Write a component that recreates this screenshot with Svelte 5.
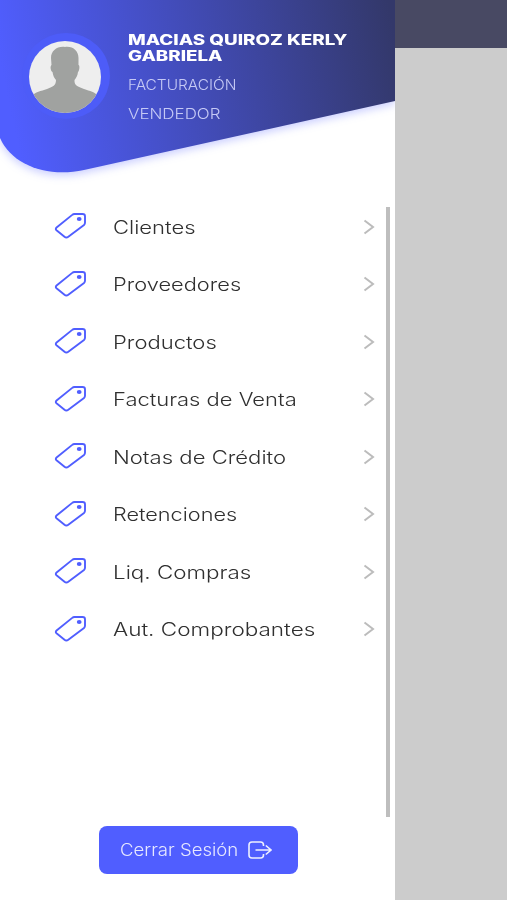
<script lang="ts">
  const user = {
    name: ['MACIAS QUIROZ KERLY', 'GABRIELA'],
    area: 'FACTURACIÓN',
    role: 'VENDEDOR'
  };

  const items = [
    { label: 'Clientes', width: 82 },
    { label: 'Proveedores', width: 128.5 },
    { label: 'Productos', width: 104 },
    { label: 'Facturas de Venta', width: 184 },
    { label: 'Notas de Crédito', width: 173 },
    { label: 'Retenciones', width: 124 },
    { label: 'Liq. Compras', width: 138 },
    { label: 'Aut. Comprobantes', width: 202.5 }
  ];

  function stretch(node: HTMLElement, width: number) {
    node.style.transform = `scaleX(${width / node.offsetWidth})`;
  }
</script>

<div class="screen">
  <aside class="drawer">
    <header class="profile">
      <svg class="profile-bg" viewBox="0 0 395 200">
        <defs>
          <linearGradient id="profile-fill" gradientUnits="userSpaceOnUse" x1="10" y1="110" x2="394" y2="28">
            <stop offset="0" stop-color="#505eff" />
            <stop offset="1" stop-color="#33386a" />
          </linearGradient>
        </defs>
        <path d="M0 0H395V101L84 170C47 178 12 165 0 138Z" fill="url(#profile-fill)" />
      </svg>

      <div class="avatar">
        <svg viewBox="0 0 72 72">
          <defs>
            <clipPath id="avatar-clip"><circle cx="36" cy="36" r="36" /></clipPath>
          </defs>
          <g clip-path="url(#avatar-clip)">
            <rect width="72" height="72" fill="#eee" />
            <path
              d="M36 6C44 5 49.500 10 49.500 17V24C51 24 50.500 30 49 31C48.500 35 47 37 45.500 39C45 45 50 46 55 48C61 50 66 51 69 55V72H3V55C6 51 12 50 18 48C23 46 27 45 27 39C25 37 24 34 23.500 31C21.500 30 21 25 22.500 24L22 17C22 10 28 5 36 6Z"
              fill="#a0a2a0"
            />
          </g>
        </svg>
      </div>

      <div class="identity">
        <h1>
          <span use:stretch={219}>{user.name[0]}</span>
          <span use:stretch={95}>{user.name[1]}</span>
        </h1>
        <p><span use:stretch={108}>{user.area}</span></p>
        <p><span use:stretch={92}>{user.role}</span></p>
      </div>
    </header>

    <nav>
      <ul>
        {#each items as item}
          <li>
            <svg class="tag" viewBox="0 0 34 28">
              <path d="M21.500 2H29.500Q32 2 32 4.300V10.800Q32 12.100 31 13L15.300 24.700Q13.300 26.200 11.500 24.700L3.500 18.300Q2 17 3.600 15.500L19.200 2.900Q20.200 2 21.500 2Z" />
              <ellipse cx="26.200" cy="7" rx="2.400" ry="2" />
            </svg>
            <span class="label" use:stretch={item.width}>{item.label}</span>
            <svg class="chevron" viewBox="0 0 12 16">
              <path d="M1.500 1.500L10 8L1.500 14.500" />
            </svg>
          </li>
        {/each}
      </ul>
    </nav>

    <button>
      <span class="logout-text"><span use:stretch={118}>Cerrar Sesión</span></span>
      <svg viewBox="0 0 24 18">
        <path d="M15.500 5V4Q15.500 1 12.500 1H4Q1 1 1 4V14Q1 17 4 17H12.500Q15.500 17 15.500 14V13" />
        <path d="M7.500 9H22.500M17.800 4.500L23 9L17.800 13.500" />
      </svg>
    </button>
  </aside>

  <div class="backdrop">
    <div class="topbar"></div>
  </div>
</div>

<style>
  :global(body) {
    margin: 0;
  }

  .screen {
    display: flex;
    height: 900px;
    overflow: hidden;
    font-family: Inter, 'Liberation Sans', sans-serif;
  }

  .drawer {
    width: 395px;
    flex-shrink: 0;
    display: flex;
    flex-direction: column;
    align-items: center;
    background: #fff;
  }

  .profile {
    position: relative;
    box-sizing: border-box;
    display: flex;
    width: 100%;
    height: 207px;
    padding: 33px 0 0 22px;
    overflow: hidden;
  }

  .profile-bg {
    position: absolute;
    top: 0;
    left: 0;
    width: 395px;
    height: 200px;
    filter: drop-shadow(0 3px 4px rgba(80, 94, 255, 0.3));
  }

  .avatar {
    position: relative;
    box-sizing: border-box;
    width: 88px;
    height: 86px;
    padding: 8px 7px;
    border-radius: 50%;
    background: #4d5cf8;
  }

  .avatar svg {
    display: block;
    width: 72px;
    height: 72px;
  }

  .identity {
    position: relative;
    margin-left: 18px;
    color: #fff;
  }

  h1,
  p {
    margin: 0;
  }

  h1 span,
  p span,
  .label,
  .logout-text span {
    display: block;
    width: max-content;
    transform-origin: left center;
    white-space: nowrap;
  }

  h1 {
    margin: -1px 0 7px;
    font-size: 14px;
    font-weight: 800;
    line-height: 15.5px;
  }

  p {
    font-size: 14px;
    font-weight: 300;
    line-height: 29px;
    color: #c5c9f5;
  }

  nav {
    box-sizing: border-box;
    width: 100%;
    height: 610px;
    padding-right: 5px;
  }

  ul {
    display: flex;
    flex-direction: column;
    box-sizing: border-box;
    height: 100%;
    margin: 0;
    padding: 0 11px 0 53px;
    border-right: 4px solid #bebebe;
    list-style: none;
  }

  li {
    display: flex;
    flex-shrink: 0;
    align-items: center;
    height: 57.5px;
  }

  li:first-child {
    margin-top: -9px;
  }

  .tag {
    width: 34px;
    height: 28px;
    margin-bottom: 1px;
    fill: none;
    stroke: #505eff;
    stroke-width: 1.9;
  }

  .tag ellipse {
    fill: #505eff;
    stroke: none;
  }

  .label {
    margin: 1px 0 0 26px;
    color: #303030;
    font-size: 18px;
    font-weight: 300;
  }

  .chevron {
    width: 12px;
    height: 16px;
    margin-left: auto;
    fill: none;
    stroke: #bcbcbc;
    stroke-width: 2;
  }

  button {
    display: flex;
    align-items: center;
    box-sizing: border-box;
    width: 199px;
    height: 48px;
    margin-top: 9px;
    margin-left: 2px;
    padding: 0 0 0 21px;
    border: 0;
    border-radius: 8px;
    background: #505eff;
    color: #e6e8ff;
    font-family: inherit;
    font-size: 17px;
    font-weight: 300;
  }

  .logout-text {
    width: 128px;
  }

  button svg {
    width: 24px;
    height: 18px;
    fill: none;
    stroke: #eef0ff;
    stroke-width: 1.6;
  }

  .backdrop {
    flex: 1;
    background: #ccc;
  }

  .topbar {
    height: 48px;
    background: #484963;
  }
</style>
